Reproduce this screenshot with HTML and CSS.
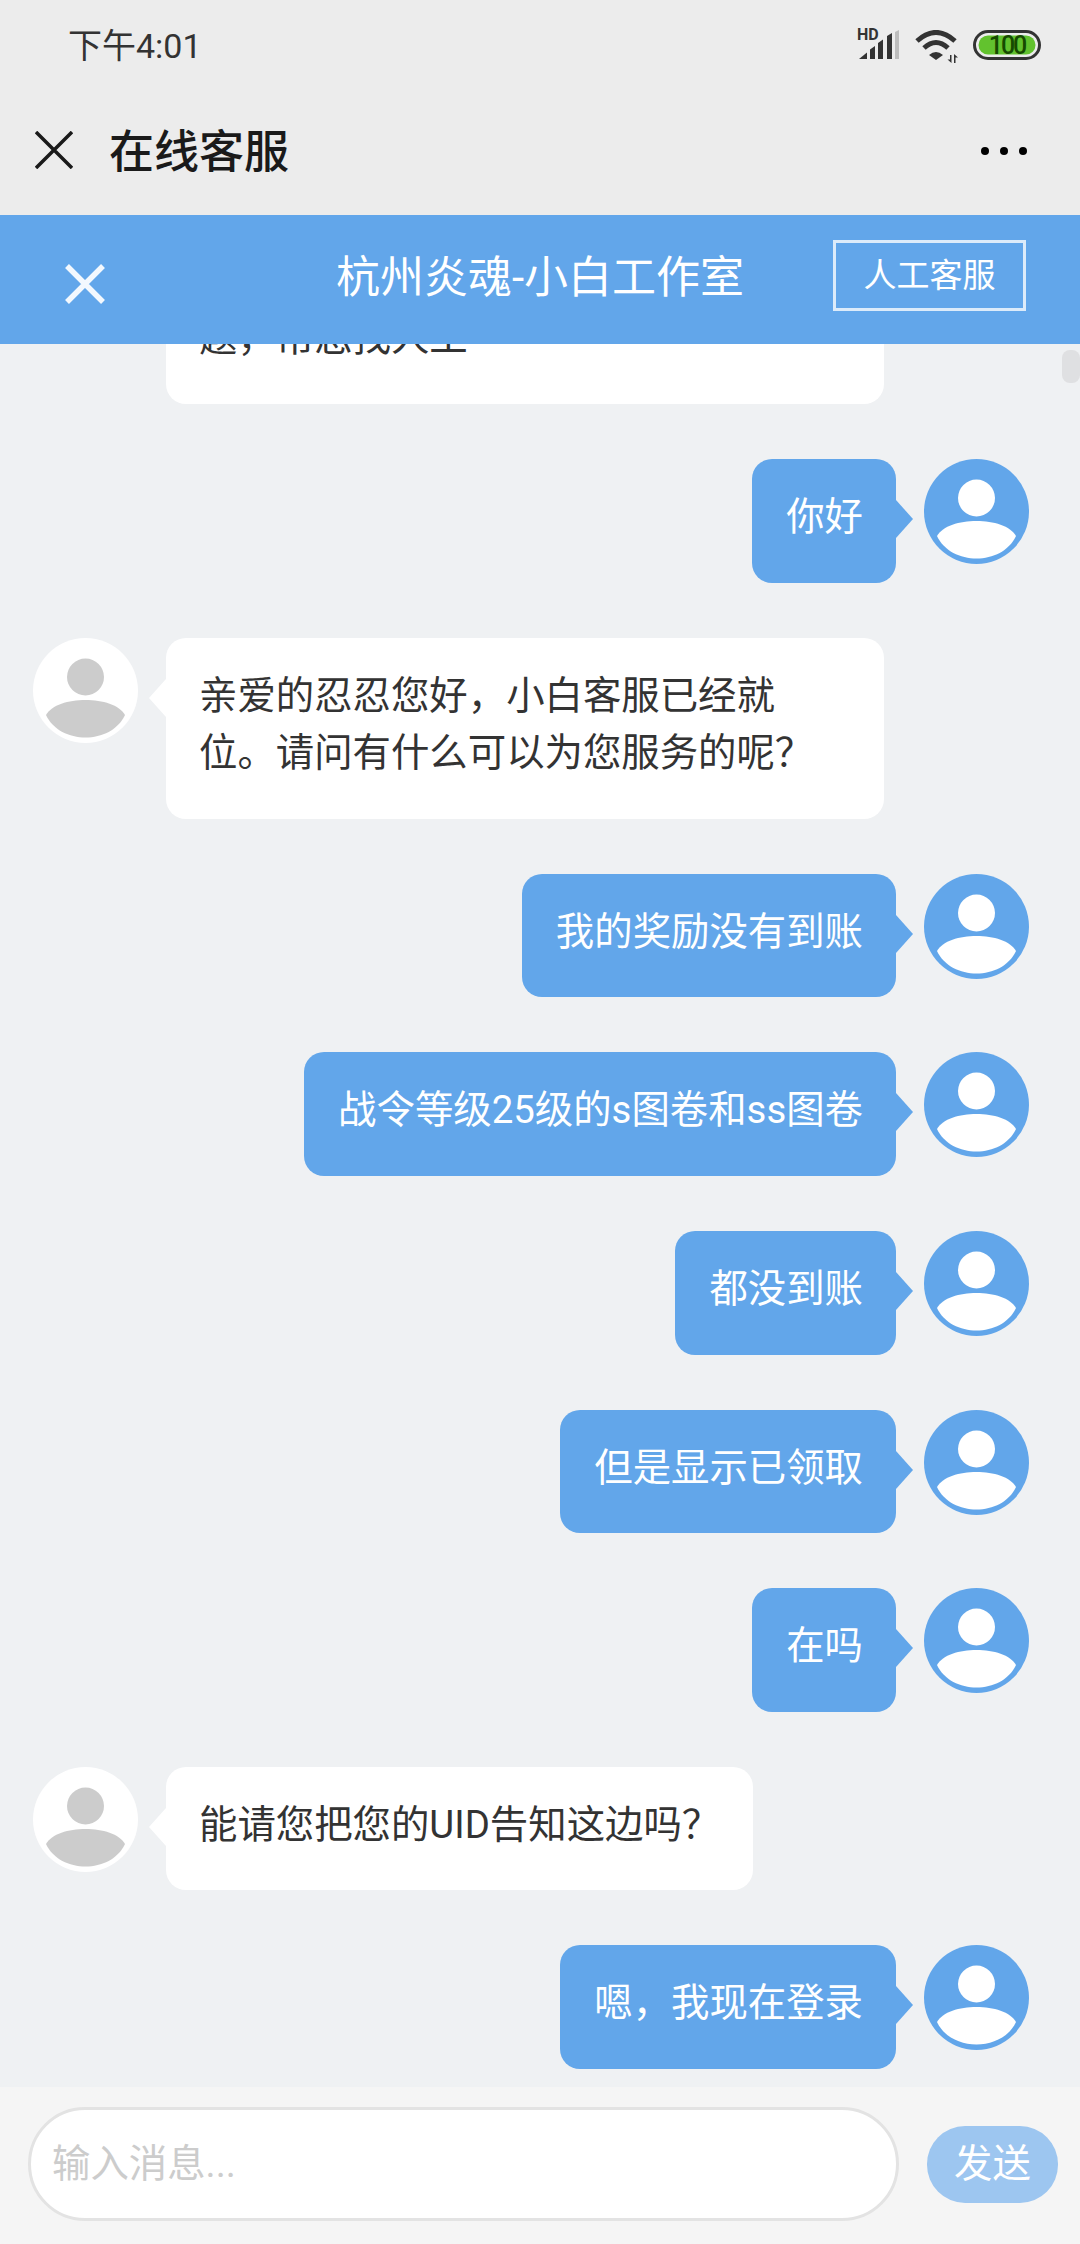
FILE: index.html
```html
<!DOCTYPE html>
<html lang="zh-CN">
<head>
    <meta charset="UTF-8">
    <title>在线客服</title>
    <link rel="stylesheet" href="styles.css">
</head>
<body>
    <div class="page">
        <!-- 状态栏 -->
        <div class="status-bar">
            <span class="time">下午4:01</span>
            <div class="status-icons">
                <svg class="icon-signal" width="44" height="34" viewBox="0 0 44 34">
                    <text x="0" y="12" class="hd-text">HD</text>
                    <path d="M2 31l8-6.500v6.500z" fill="#333"/>
                    <path d="M13 31v-9.500l5-3.500v13zM21 31v-16l5-3.500v19.500zM30 31v-23l5-3v26z" fill="#333"/>
                    <path d="M38 31v-27l4-2v29z" fill="#bdbdbd"/>
                </svg>
                <svg class="icon-wifi" width="44" height="34" viewBox="0 0 44 34">
                    <path d="M2 11Q21 -6 40 11" class="wifi-arc"/>
                    <path d="M9 18Q21 7 33 18" class="wifi-arc"/>
                    <path d="M21 30l-7-5Q21 19 28 25z" fill="#333"/>
                    <path d="M35 25h1.500v8l-4-3.500h2.500zM39 24l4 3.500h-2.500v5.500H39z" fill="#333"/>
                </svg>
                <svg class="icon-battery" width="68" height="30" viewBox="0 0 68 30">
                    <rect x="1.500" y="1.500" width="65" height="27" rx="13.500" fill="none" stroke="#333" stroke-width="3"/>
                    <rect x="5.500" y="5.500" width="57" height="19" rx="9.500" fill="#62c22e"/>
                    <text x="34" y="23.500" text-anchor="middle" class="battery-text">100</text>
                </svg>
            </div>
        </div>

        <!-- 标题栏 -->
        <div class="title-bar">
            <svg class="title-close" width="38" height="38" viewBox="0 0 38 38">
                <path d="M1 1L37 37M37 1L1 37" stroke="#1a1a1a" stroke-width="3.500" fill="none"/>
            </svg>
            <span class="title-text">在线客服</span>
            <div class="more">
                <i></i><i></i><i></i>
            </div>
        </div>

        <!-- 客服头部 -->
        <div class="service-head">
            <svg class="service-close" width="40" height="40" viewBox="0 0 40 40">
                <path d="M2 2L38 38M38 2L2 38" stroke="#fff" stroke-width="5.500" fill="none" opacity=".92"/>
            </svg>
            <span class="service-name">杭州炎魂-小白工作室</span>
            <a class="service-btn">人工客服</a>
        </div>

        <!-- 聊天区域 -->
        <div class="chat">
            <div class="scroll-thumb"></div>

            <div class="row row-left">
                <svg class="avatar" viewBox="0 0 105 105"><circle cx="52.500" cy="52.500" r="52.500" fill="#fff"/><circle cx="52.500" cy="39" r="18.500" fill="#ccc"/><path d="M13 77C24 57 81 57 92 77C78 107 27 107 13 77z" fill="#ccc"/></svg>
                <div class="bubble bubble-left">您好，这里是小白工作室，如有问题，帮您找人工</div>
            </div>

            <div class="row row-right">
                <div class="bubble bubble-right">你好</div>
                <svg class="avatar" viewBox="0 0 105 105"><circle cx="52.500" cy="52.500" r="52.500" fill="#62a6ea"/><circle cx="52.500" cy="39" r="18.500" fill="#fff"/><path d="M13 77C24 57 81 57 92 77C78 107 27 107 13 77z" fill="#fff"/></svg>
            </div>

            <div class="row row-left">
                <svg class="avatar" viewBox="0 0 105 105"><circle cx="52.500" cy="52.500" r="52.500" fill="#fff"/><circle cx="52.500" cy="39" r="18.500" fill="#ccc"/><path d="M13 77C24 57 81 57 92 77C78 107 27 107 13 77z" fill="#ccc"/></svg>
                <div class="bubble bubble-left">亲爱的忍忍您好，小白客服已经就位。请问有什么可以为您服务的呢？</div>
            </div>

            <div class="row row-right">
                <div class="bubble bubble-right">我的奖励没有到账</div>
                <svg class="avatar" viewBox="0 0 105 105"><circle cx="52.500" cy="52.500" r="52.500" fill="#62a6ea"/><circle cx="52.500" cy="39" r="18.500" fill="#fff"/><path d="M13 77C24 57 81 57 92 77C78 107 27 107 13 77z" fill="#fff"/></svg>
            </div>

            <div class="row row-right">
                <div class="bubble bubble-right">战令等级25级的s图卷和ss图卷</div>
                <svg class="avatar" viewBox="0 0 105 105"><circle cx="52.500" cy="52.500" r="52.500" fill="#62a6ea"/><circle cx="52.500" cy="39" r="18.500" fill="#fff"/><path d="M13 77C24 57 81 57 92 77C78 107 27 107 13 77z" fill="#fff"/></svg>
            </div>

            <div class="row row-right">
                <div class="bubble bubble-right">都没到账</div>
                <svg class="avatar" viewBox="0 0 105 105"><circle cx="52.500" cy="52.500" r="52.500" fill="#62a6ea"/><circle cx="52.500" cy="39" r="18.500" fill="#fff"/><path d="M13 77C24 57 81 57 92 77C78 107 27 107 13 77z" fill="#fff"/></svg>
            </div>

            <div class="row row-right">
                <div class="bubble bubble-right">但是显示已领取</div>
                <svg class="avatar" viewBox="0 0 105 105"><circle cx="52.500" cy="52.500" r="52.500" fill="#62a6ea"/><circle cx="52.500" cy="39" r="18.500" fill="#fff"/><path d="M13 77C24 57 81 57 92 77C78 107 27 107 13 77z" fill="#fff"/></svg>
            </div>

            <div class="row row-right">
                <div class="bubble bubble-right">在吗</div>
                <svg class="avatar" viewBox="0 0 105 105"><circle cx="52.500" cy="52.500" r="52.500" fill="#62a6ea"/><circle cx="52.500" cy="39" r="18.500" fill="#fff"/><path d="M13 77C24 57 81 57 92 77C78 107 27 107 13 77z" fill="#fff"/></svg>
            </div>

            <div class="row row-left">
                <svg class="avatar" viewBox="0 0 105 105"><circle cx="52.500" cy="52.500" r="52.500" fill="#fff"/><circle cx="52.500" cy="39" r="18.500" fill="#ccc"/><path d="M13 77C24 57 81 57 92 77C78 107 27 107 13 77z" fill="#ccc"/></svg>
                <div class="bubble bubble-left">能请您把您的UID告知这边吗？</div>
            </div>

            <div class="row row-right">
                <div class="bubble bubble-right">嗯，我现在登录</div>
                <svg class="avatar" viewBox="0 0 105 105"><circle cx="52.500" cy="52.500" r="52.500" fill="#62a6ea"/><circle cx="52.500" cy="39" r="18.500" fill="#fff"/><path d="M13 77C24 57 81 57 92 77C78 107 27 107 13 77z" fill="#fff"/></svg>
            </div>
        </div>

        <!-- 输入区域 -->
        <div class="input-bar">
            <input class="msg-input" type="text" placeholder="输入消息...">
            <div class="send-btn">发送</div>
        </div>
    </div>
</body>
</html>
```

FILE: styles.css
```css
* {
    margin: 0;
    padding: 0;
    box-sizing: border-box;
}

body {
    font-family: Roboto, "Noto Sans CJK SC", sans-serif;
    background-color: #eff1f3;
}

.page {
    width: 1080px;
    height: 2244px;
    display: flex;
    flex-direction: column;
    overflow: hidden;
}

/* 状态栏 */
.status-bar {
    height: 92px;
    flex-shrink: 0;
    background-color: #ececec;
    display: flex;
    justify-content: space-between;
    padding: 28px 39px 0 68px;
}

.time {
    font-size: 34px;
    line-height: 36px;
    color: #333;
}

.status-icons {
    display: flex;
    align-items: flex-start;
}

.icon-signal {
    margin-right: 14px;
}

.icon-wifi {
    margin-top: 2px;
    margin-right: 14px;
}

.icon-battery {
    margin-top: 2px;
}

.hd-text {
    font-size: 16px;
    font-weight: 700;
    fill: #333;
}

.wifi-arc {
    fill: none;
    stroke: #333;
    stroke-width: 5;
}

.battery-text {
    font-size: 25px;
    font-weight: 500;
    letter-spacing: -2px;
    fill: #164a00;
}

/* 标题栏 */
.title-bar {
    height: 123px;
    flex-shrink: 0;
    background-color: #ececec;
    display: flex;
    align-items: center;
    padding: 0 53px 8px 35px;
}

.title-close {
    margin-right: 36px;
}

.title-text {
    font-size: 45px;
    line-height: 60px;
    font-weight: 500;
    color: #1a1a1a;
    flex: 1;
    margin-top: 6px;
}

.more {
    display: flex;
    gap: 11px;
    margin-top: 2px;
}

.more i {
    width: 8px;
    height: 8px;
    border-radius: 50%;
    background-color: #000;
}

/* 客服头部 */
.service-head {
    height: 129px;
    flex-shrink: 0;
    background-color: #62a6ea;
    display: grid;
    grid-template-columns: 1fr auto 1fr;
    align-items: center;
    padding: 0 54px;
}

.service-close {
    margin-left: 11px;
    margin-top: 8px;
}

.service-name {
    font-size: 44px;
    line-height: 60px;
    color: #fff;
    margin-top: -4px;
}

.service-btn {
    justify-self: end;
    width: 193px;
    height: 71px;
    margin-bottom: 9px;
    border: 3px solid #dcebfa;
    font-size: 33px;
    line-height: 65px;
    text-align: center;
    color: #fff;
}

/* 聊天区域 */
.chat {
    flex: 1;
    min-height: 0;
    position: relative;
    overflow: hidden;
    display: flex;
    flex-direction: column;
    justify-content: flex-end;
    gap: 55px;
    padding-bottom: 18px;
    background-color: #eff1f3;
}

.scroll-thumb {
    position: absolute;
    top: 6px;
    right: 0;
    width: 18px;
    height: 33px;
    border-radius: 8px;
    background-color: #dfe0e2;
}

.row {
    display: flex;
    align-items: flex-start;
    flex-shrink: 0;
    gap: 28px;
}

.row-left {
    padding-left: 33px;
}

.row-right {
    justify-content: flex-end;
    padding-right: 51px;
}

.avatar {
    width: 105px;
    height: 105px;
    flex-shrink: 0;
}

.bubble {
    position: relative;
    max-width: 718px;
    padding: 29px 33px 37px 34px;
    border-radius: 20px;
    font-size: 38.400px;
    line-height: 1.5;
}

.bubble::after {
    content: "";
    position: absolute;
    top: 41px;
    border-top: 19px solid transparent;
    border-bottom: 19px solid transparent;
}

.bubble-left {
    padding-left: 33px;
    background-color: #fff;
    color: #333;
}

.bubble-left::after {
    left: -17px;
    border-right: 17px solid #fff;
}

.bubble-right {
    background-color: #62a6ea;
    color: #fff;
}

.bubble-right::after {
    right: -17px;
    border-left: 17px solid #62a6ea;
}

/* 输入区域 */
.input-bar {
    height: 157px;
    flex-shrink: 0;
    background-color: #f5f5f5;
    display: flex;
    align-items: center;
    gap: 28px;
    padding: 20px 22px 23px 28px;
}

.msg-input {
    flex: 1;
    min-width: 0;
    height: 114px;
    border: 3px solid #e3e3e3;
    border-radius: 57px;
    background-color: #fff;
    padding: 0 21px 2px;
    font-family: inherit;
    font-size: 38.400px;
    outline: none;
}

.msg-input::placeholder {
    color: #ccc;
}

.send-btn {
    width: 131px;
    height: 77px;
    border-radius: 38px;
    background-color: #9dc6f0;
    color: #fff;
    font-size: 38.400px;
    line-height: 76px;
    text-align: center;
}
```
